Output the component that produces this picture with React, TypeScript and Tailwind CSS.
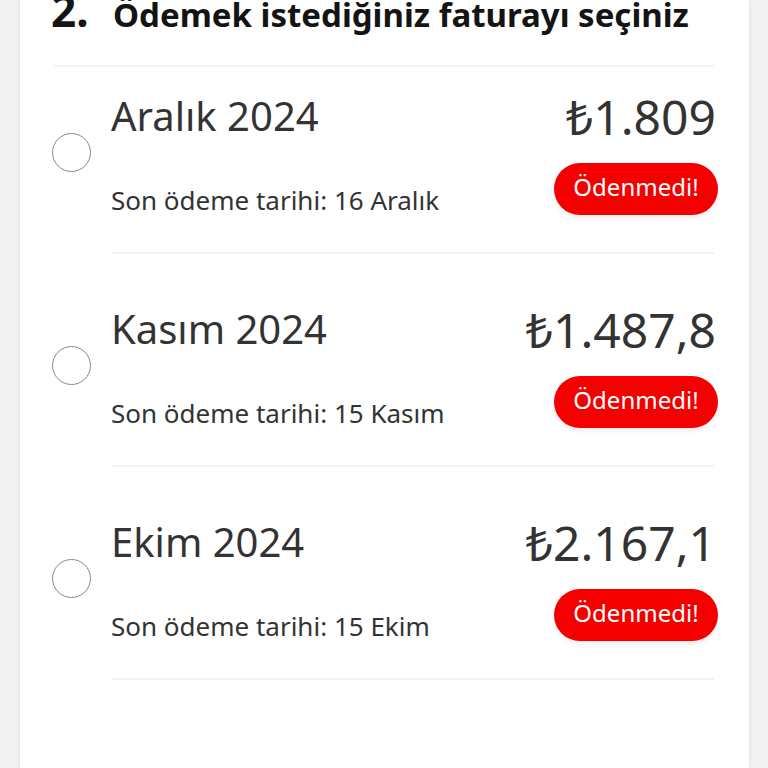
import React from 'react';

interface Bill {
    month: string;
    amount: string;
    due: string;
}

const bills: Bill[] = [
    { month: 'Aralık 2024', amount: '1.809', due: '16 Aralık' },
    { month: 'Kasım 2024', amount: '1.487,8', due: '15 Kasım' },
    { month: 'Ekim 2024', amount: '2.167,1', due: '15 Ekim' },
];

const BillRow: React.FC<{ bill: Bill; first?: boolean }> = ({ bill, first }) => {
    return (
        <div className={first ? 'pt-[21px]' : 'pt-[47px]'}>
            <div className="flex">
                <div className="w-[91px] pl-[32px] pt-[45px]">
                    <span className="block w-[39px] h-[39px] rounded-full border-[1.5px] border-[#8a8a8a] bg-white" />
                </div>
                <div className="flex-1 flex justify-between pr-[31px]">
                    <div className="flex flex-col pt-[4px]">
                        <span className="text-[40px] leading-[48px] text-[#333333]">{bill.month}</span>
                        <span className="mt-[42px] text-[26px] leading-[36px] text-[#333333]">
                            Son ödeme tarihi: {bill.due}
                        </span>
                    </div>
                    <div className="flex flex-col items-end">
                        <span className="mr-[2px] text-[48px] leading-[57px] text-[#333333]">₺{bill.amount}</span>
                        <span className="mt-[18px] h-[52px] w-[164px] pb-[5px] rounded-full bg-[#f40000] text-white text-[24px] flex items-center justify-center shadow-[0_3px_4px_rgba(0,0,0,0.07)]">
                            Ödenmedi!
                        </span>
                    </div>
                </div>
            </div>
            <div className="mt-[34px] ml-[92px] mr-[35px] h-[2px] bg-[#f3f3f3]" />
        </div>
    );
};

export default function App() {
    return (
        <div
            className="h-[768px] overflow-hidden bg-[#f2f2f2] pl-[20px] pr-[19px]"
            style={{ fontFamily: '"Noto Sans", "DejaVu Sans", sans-serif' }}
        >
            <div className="flow-root h-full bg-white shadow-[0_0_4px_rgba(0,0,0,0.12)]">
                <div className="flex items-baseline pl-[31px] -mt-[12px] leading-none text-[#141414] font-bold">
                    <span className="text-[44px] w-[62px]">2.</span>
                    <span className="text-[33px]">Ödemek istediğiniz faturayı seçiniz</span>
                </div>
                <div className="mt-[33px] ml-[34px] mr-[35px] h-[2px] bg-[#f3f3f3]" />
                {bills.map((b, i) => (
                    <BillRow key={b.month} bill={b} first={i === 0} />
                ))}
            </div>
        </div>
    );
}
